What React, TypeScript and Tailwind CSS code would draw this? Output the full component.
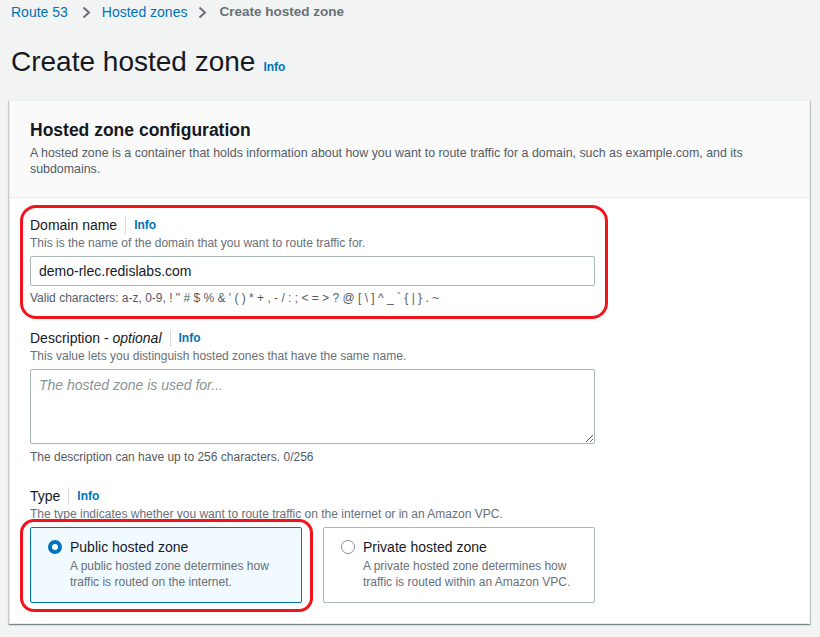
import type { ReactNode } from 'react';

function Chevron() {
  return (
    <svg width="9" height="13" viewBox="0 0 9 13" className="shrink-0">
      <polyline points="1.5,1.5 7,6.5 1.5,11.5" fill="none" stroke="#687078" strokeWidth="2" />
    </svg>
  );
}

function InfoLink({ className = '' }: { className?: string }) {
  return <span className={`text-[12px] font-bold text-[#0073bb] ${className}`}>Info</span>;
}

function FieldLabel({ children }: { children: ReactNode }) {
  return (
    <div className="flex items-center h-[20px] text-[14px] leading-[20px] text-[#16191f]">
      <span>{children}</span>
      <span className="mx-[8px] w-px h-[17px] bg-[#d5dbdb]" />
      <InfoLink />
    </div>
  );
}

function Hint({ children }: { children: ReactNode }) {
  return <p className="text-[12px] leading-[16px] text-[#687078]">{children}</p>;
}

function RadioTile({
  selected,
  title,
  lines,
}: {
  selected?: boolean;
  title: string;
  lines: [string, string];
}) {
  return (
    <div
      className={`h-[76px] rounded-[2px] border pt-[9px] pl-[17px] ${
        selected ? 'bg-[#f1faff] border-[#0073bb]' : 'bg-white border-[#aab7b8]'
      }`}
    >
      <div className="flex items-center h-[20px]">
        {selected ? (
          <span className="w-[14px] h-[14px] rounded-full border-[4px] border-[#0073bb] bg-white" />
        ) : (
          <span className="w-[14px] h-[14px] rounded-full border-[1.5px] border-[#879596] bg-white" />
        )}
        <span className="ml-[8px] text-[14px] leading-[20px] text-[#16191f]">{title}</span>
      </div>
      <p className="ml-[22px] mt-px text-[12px] leading-[16px] text-[#687078]">
        {lines[0]}
        <br />
        {lines[1]}
      </p>
    </div>
  );
}

export default function App() {
  return (
    <div className="min-h-screen bg-[#f2f3f3] px-[9px] font-['Liberation_Sans',Arial,sans-serif] overflow-hidden">
      {/* breadcrumb */}
      <nav className="flex items-center h-[24px] pl-[2px] text-[14px]">
        <span className="text-[#0073bb]">Route 53</span>
        <span className="ml-[14px] mr-[11px] flex">
          <Chevron />
        </span>
        <span className="text-[#0073bb]">Hosted zones</span>
        <span className="ml-[11px] mr-[12px] flex">
          <Chevron />
        </span>
        <span className="font-bold text-[13.5px] text-[#687078]">Create hosted zone</span>
      </nav>

      {/* page title */}
      <div className="mt-[20px] flex items-baseline h-[36px] pl-[2px]">
        <h1 className="text-[28px] leading-[36px] font-normal text-[#16191f]">Create hosted zone</h1>
        <InfoLink className="ml-[8px]" />
      </div>

      {/* form card */}
      <section className="mt-[20px] w-[801px] bg-white border border-[#eaeded] shadow-[0_1px_1px_0_rgba(0,28,36,0.3),1px_1px_1px_0_rgba(0,28,36,0.15),-1px_1px_1px_0_rgba(0,28,36,0.15)]">
        <header className="bg-[#fafafa] border-b border-[#eaeded] px-[20px] pt-[17px] pb-[20px]">
          <h2 className="text-[17.5px] leading-[24px] font-bold text-[#16191f]">Hosted zone configuration</h2>
          <p className="mt-[3px] max-w-[740px] text-[12.4px] leading-[16px] text-[#545b64]">
            A hosted zone is a container that holds information about how you want to route traffic for a domain,
            such as example.com, and its subdomains.
          </p>
        </header>

        <div className="pl-[20px] pr-[214px] pt-[17px] pb-[20px]">
          {/* domain name */}
          <div className="-ml-[10px] -mr-[13px] -mt-[10px] -mb-[13px] border-[3px] border-[#f2141c] rounded-[16px] pl-[7px] pr-[10px] pt-[7px] pb-[10px]">
            <FieldLabel>Domain name</FieldLabel>
            <Hint>This is the name of the domain that you want to route traffic for.</Hint>
            <div className="mt-[5px] h-[30px] flex items-center rounded-[2px] border border-[#aab7b8] px-[8px] text-[14px] text-[#16191f]">
              demo-rlec.redislabs.com
            </div>
            <p className="mt-[4px] text-[12px] leading-[16px] text-[#545b64]">
              Valid characters: a-z, 0-9, ! " # $ % &amp; ' ( ) * + , - / : ; &lt; = &gt; ? @ [ \ ] ^ _ ` {'{'} | {'}'} . ~
            </p>
          </div>

          {/* description */}
          <div className="mt-[22px]">
            <FieldLabel>
              Description - <i>optional</i>
            </FieldLabel>
            <Hint>This value lets you distinguish hosted zones that have the same name.</Hint>
            <textarea
              readOnly
              placeholder="The hosted zone is used for..."
              className="mt-[5px] block w-full h-[75px] rounded-[2px] border border-[#aab7b8] px-[8px] py-[4px] text-[14px] leading-[22px] text-[#16191f] placeholder:italic placeholder:text-[#879596] outline-none"
            />
            <p className="mt-[5px] text-[12px] leading-[16px] text-[#545b64]">
              The description can have up to 256 characters. 0/256
            </p>
          </div>

          {/* type */}
          <div className="mt-[21px]">
            <FieldLabel>Type</FieldLabel>
            <Hint>The type indicates whether you want to route traffic on the internet or in an Amazon VPC.</Hint>
            <div className="mt-[5px] grid grid-cols-2 gap-x-[21px]">
              <div className="-ml-[10px] -mr-[11px] -mt-[8px] -mb-[9px] border-[3px] border-[#f2141c] rounded-[14px] pl-[7px] pr-[8px] pt-[5px] pb-[6px]">
                <RadioTile
                  selected
                  title="Public hosted zone"
                  lines={['A public hosted zone determines how', 'traffic is routed on the internet.']}
                />
              </div>
              <RadioTile
                title="Private hosted zone"
                lines={['A private hosted zone determines how', 'traffic is routed within an Amazon VPC.']}
              />
            </div>
          </div>
        </div>
      </section>
    </div>
  );
}
